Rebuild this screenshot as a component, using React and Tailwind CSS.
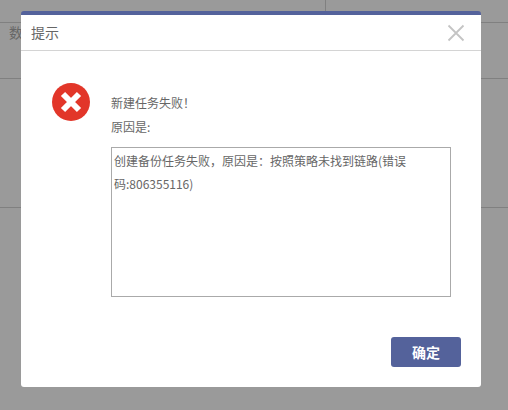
import React from 'react';

const fontStack = "font-['Noto_Sans_CJK_SC','Noto_Sans',sans-serif]";

function ErrorIcon() {
  return (
    <svg width="38" height="38" viewBox="0 0 38 38" className="shrink-0">
      <circle cx="19" cy="19" r="19" fill="#e23629" />
      <path d="M11 11 L27 27 M27 11 L11 27" stroke="#fff" strokeWidth="6" />
    </svg>
  );
}

function CloseIcon() {
  return (
    <svg width="18" height="18" viewBox="0 0 18 18">
      <path d="M1.5 1.5 L16.5 16.5 M16.5 1.5 L1.5 16.5" stroke="#c4c4c4" strokeWidth="1.8" fill="none" />
    </svg>
  );
}

export default function App() {
  return (
    <div className={`relative h-[410px] w-[508px] overflow-hidden bg-[#9a9a9a] ${fontStack}`}>
      {/* table behind the mask */}
      <div className="h-[23px] border-b border-[#808080] pl-[325px]">
        <div className="h-full w-px bg-[#808080]"></div>
      </div>
      <div className="h-[56px] border-b border-[#808080] pl-[9px] text-[14px] leading-[18px] text-[#666]">数</div>
      <div className="h-[129px] border-b border-[#808080]"></div>

      <div className="absolute left-[21px] top-[11px] flex h-[376px] w-[460px] flex-col rounded-[3px] border-t-4 border-[#54629b] bg-white">
        <div className="flex h-[36px] shrink-0 items-center justify-between border-b border-[#d4d4d4] pl-[10px] pr-[16px]">
          <span className="text-[14px] text-[#666]">提示</span>
          <CloseIcon />
        </div>

        <div className="flex flex-1 pl-[31px] pt-[32px]">
          <ErrorIcon />
          <div className="ml-[21px] flex flex-col pt-[8px] text-[12px] text-[#666]">
            <p className="leading-[24px]">新建任务失败！</p>
            <p className="leading-[24px]">原因是:</p>
            <textarea
              readOnly
              className="mt-[8px] h-[150px] w-[340px] resize-none border border-[#aaa] px-[2px] py-[1px] text-[12px] leading-[23px] text-[#666] outline-none"
              value="创建备份任务失败，原因是：按照策略未找到链路(错误码:806355116)"
            />
          </div>
        </div>

        <div className="flex justify-end pb-[20px] pr-[20px]">
          <button className="h-[30px] w-[70px] rounded-[3px] bg-[#54629b] text-[14px] font-bold text-white">确定</button>
        </div>
      </div>
    </div>
  );
}
